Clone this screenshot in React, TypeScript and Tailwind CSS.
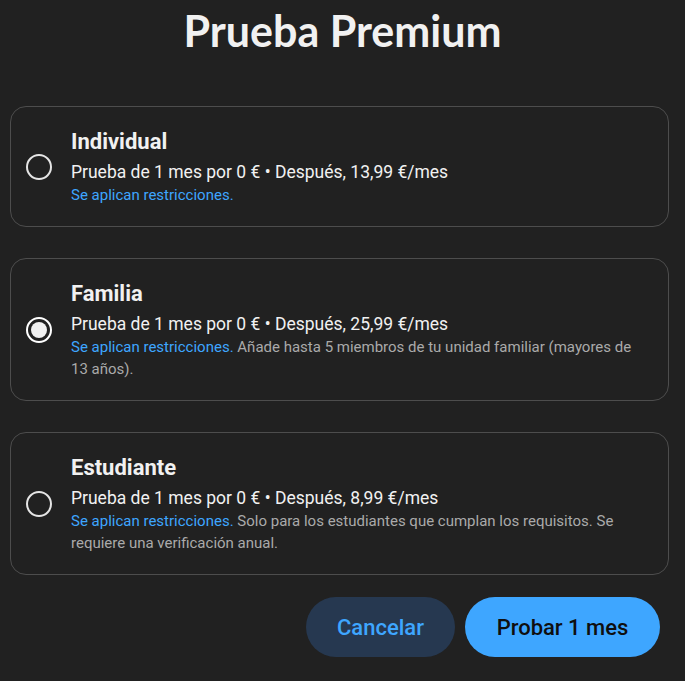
import React from 'react';

interface Plan {
  id: string;
  name: string;
  price: string;
  note?: string;
  selected?: boolean;
}

const plans: Plan[] = [
  {
    id: 'individual',
    name: 'Individual',
    price: 'Prueba de 1 mes por 0 € • Después, 13,99 €/mes',
  },
  {
    id: 'familia',
    name: 'Familia',
    price: 'Prueba de 1 mes por 0 € • Después, 25,99 €/mes',
    note: 'Añade hasta 5 miembros de tu unidad familiar (mayores de 13 años).',
    selected: true,
  },
  {
    id: 'estudiante',
    name: 'Estudiante',
    price: 'Prueba de 1 mes por 0 € • Después, 8,99 €/mes',
    note: 'Solo para los estudiantes que cumplan los requisitos. Se requiere una verificación anual.',
  },
];

const Radio: React.FC<{ checked?: boolean }> = ({ checked }) => (
  <div
    className={`flex h-[26px] w-[26px] shrink-0 items-center justify-center rounded-full border-2 ${
      checked ? 'border-white' : 'border-[#e5e5e5]'
    }`}
  >
    {checked && <div className="h-[16px] w-[16px] rounded-full bg-[#f1f1f1]" />}
  </div>
);

export default function App() {
  return (
    <div
      className="min-h-[681px] w-[685px] bg-[#212121] text-[#f1f1f1]"
      style={{ fontFamily: 'Roboto, "Liberation Sans", sans-serif' }}
    >
      <h1
        className="pt-[3px] text-center text-[43px] font-bold leading-[56px] text-[#f1f1f1]"
        style={{ fontFamily: 'Lato, "Open Sans", sans-serif' }}
      >
        Prueba Premium
      </h1>

      <div className="mt-[47px] ml-[10px] flex w-[659px] flex-col gap-[31px]">
        {plans.map((plan) => (
          <div
            key={plan.id}
            className="flex items-center gap-[19px] rounded-[16px] border border-[#4d4d4d] pt-[21px] pb-[20px] pl-[15px] pr-[24px]"
          >
            <Radio checked={plan.selected} />
            <div className="flex flex-col">
              <div className="text-[22px] font-bold leading-[28px] text-[#f1f1f1]">{plan.name}</div>
              <div className="mt-1 text-[17.5px] leading-[24px] text-[#f1f1f1]">{plan.price}</div>
              <div className="text-[15px] leading-[22px] text-[#aaaaaa]">
                <span className="text-[#3ea6ff]">Se aplican restricciones.</span>
                {plan.note && <> {plan.note}</>}
              </div>
            </div>
          </div>
        ))}
      </div>

      <div className="mt-[22px] flex justify-end gap-[10px] pr-[25px]">
        <button className="h-[60px] w-[149px] rounded-full bg-[#263850] text-[22px] font-medium text-[#3ea6ff]">
          Cancelar
        </button>
        <button className="h-[60px] w-[195px] rounded-full bg-[#3ea6ff] text-[22px] font-medium text-[#0f0f0f]">
          Probar 1 mes
        </button>
      </div>
    </div>
  );
}
